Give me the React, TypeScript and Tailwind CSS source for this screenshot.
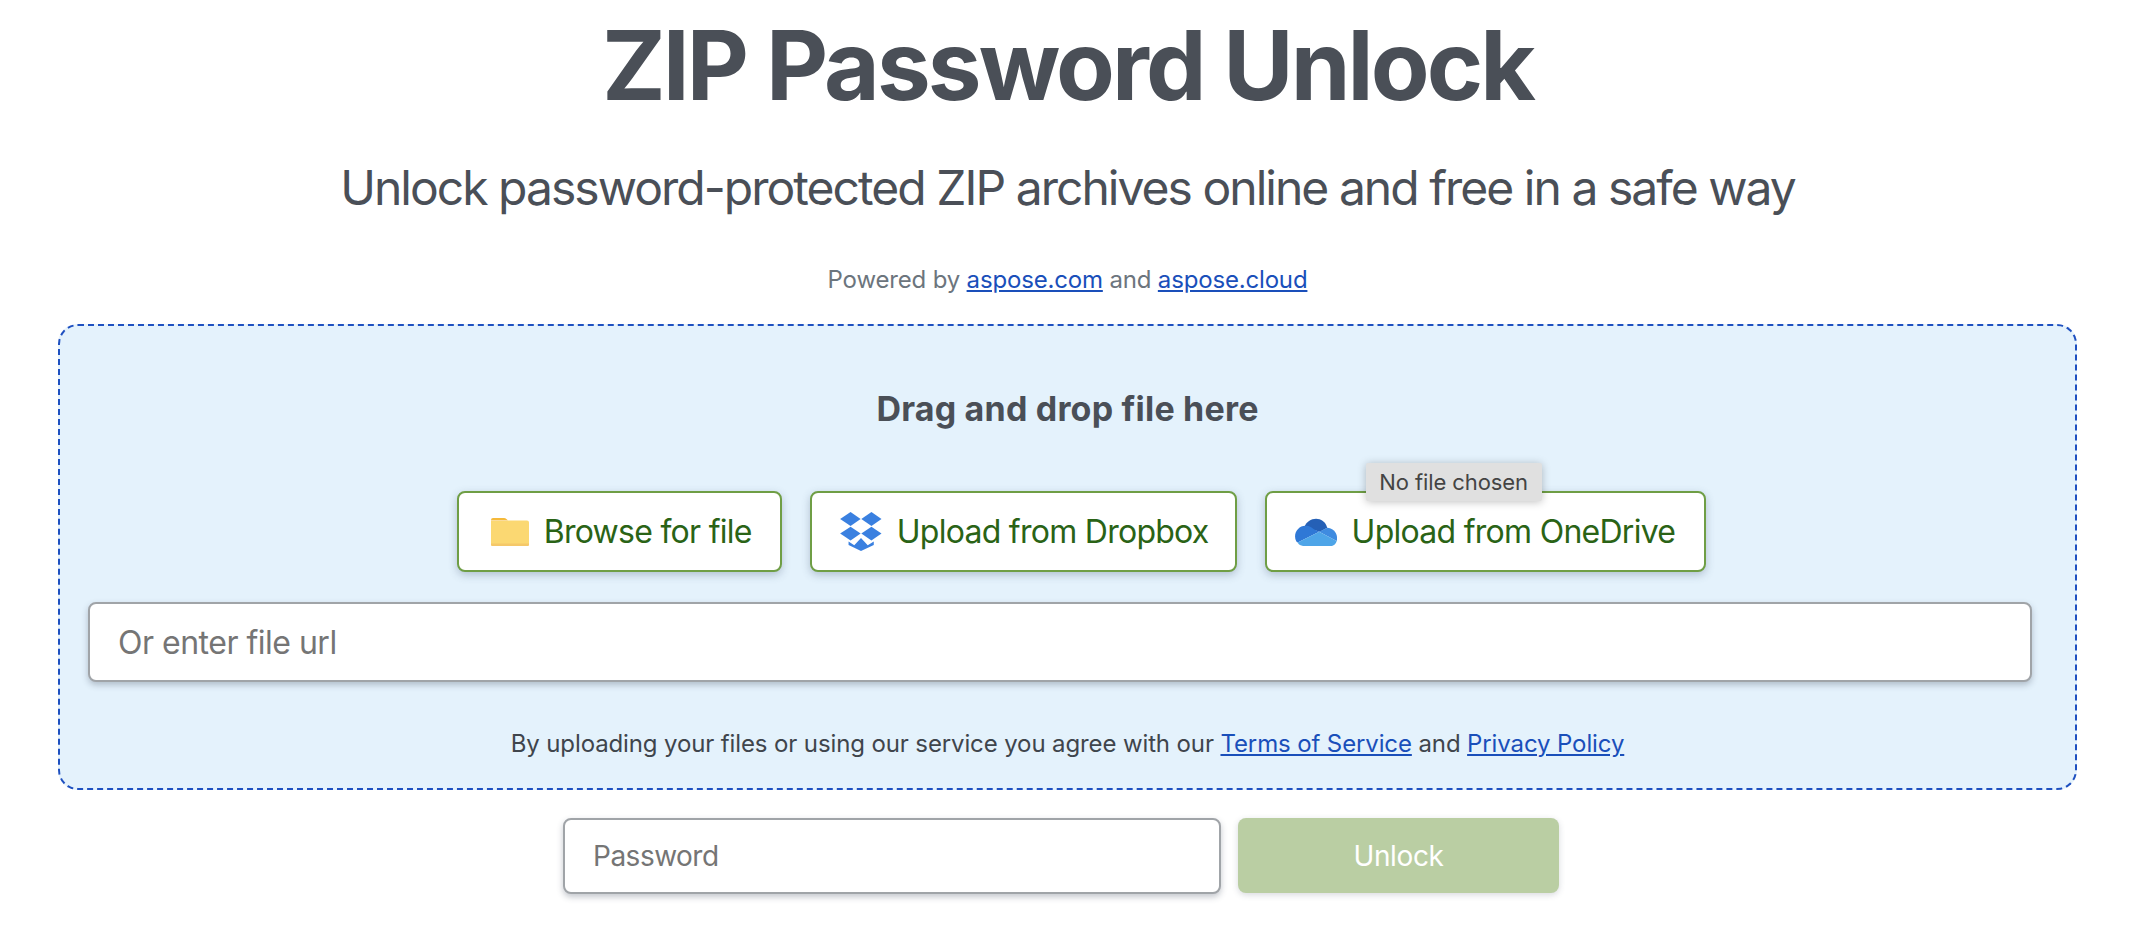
function FolderIcon() {
  return (
    <svg width="38" height="28" viewBox="0 0 38 28" className="shrink-0">
      <path d="M0 2a2 2 0 0 1 2-2h11c2 0 3 1.500 4 2.500H0z" fill="#f5b93a" />
      <path d="M0 3h15l2-.5h19a2 2 0 0 1 2 2V26H0z" fill="#fbd872" />
      <path d="M0 25.500h38V27a1 1 0 0 1-1 1H1a1 1 0 0 1-1-1z" fill="#f5c869" />
    </svg>
  );
}

function DropboxIcon() {
  return (
    <svg width="42" height="39" viewBox="30 15 124 116" className="shrink-0">
      <g fill="#3a80e0">
        <polygon points="61,15 91,36 61,57 30,36" />
        <polygon points="123,15 153,36 123,57 93,36" />
        <polygon points="61,59 91,79 61,100 30,79" />
        <polygon points="123,59 153,79 123,100 93,79" />
        <polygon points="55,103 72,114 92,92 112,114 130,103 130,113 92,131 55,113" />
      </g>
    </svg>
  );
}

function OneDriveIcon() {
  return (
    <svg width="42" height="28" viewBox="18 33 125 83" className="shrink-0">
      <path d="M46 60C56 28 104 24 114 62L92 74Z" fill="#2560b6" />
      <path d="M22 103C10 80 28 55 50 56C58 55 66 60 74 66L90 74L26 106Z" fill="#2f78d6" />
      <path d="M90 74L114 62C130 62 146 78 143 98L142 101Z" fill="#3f8be0" />
      <path d="M26 106L90 74L142 101C140 110 132 116 124 116L42 116C35 116 29 112 26 106Z" fill="#4ea5e8" />
    </svg>
  );
}

const linkClass = 'text-[#1a4fba] underline';
const buttonClass = 'flex h-[81px] items-center gap-[15px] rounded-lg border-2 border-[#6f9e45] bg-white text-[32px] tracking-[-0.73px] text-[#2a6316] shadow-[0_3px_8px_rgba(60,80,110,0.3)]';
const inputClass = 'rounded-lg border-2 border-[#a0a4a8] bg-white text-[#495057] outline-none placeholder:text-[#757575] shadow-[0_3px_6px_rgba(60,70,90,0.3)]';

export default function App() {
  return (
    <div className="flex min-h-screen flex-col items-center bg-white pr-[17px] font-[Inter,sans-serif] text-[#4a4f57]">
      <h1 className="text-[96px] leading-[130px] font-bold tracking-[-2.9px]">ZIP Password Unlock</h1>
      <h2 className="mt-[26px] text-[48px] leading-[64px] font-normal tracking-[-1.97px]">Unlock password-protected ZIP archives online and free in a safe way</h2>
      <p className="mt-[42px] text-[24px] leading-9 tracking-[-0.17px] text-[#6c757d]">
        Powered by <a className={linkClass}>aspose.com</a> and <a className={linkClass}>aspose.cloud</a>
      </p>

      <div className="mt-[26px] flex h-[466px] w-[2019px] flex-col items-center rounded-[20px] border-2 border-dashed border-[#1e50c0] bg-[#e4f2fc] px-[28px] pt-[63px]">
        <h3 className="text-[34px] leading-10 font-bold tracking-[0.2px]">Drag and drop file here</h3>
        <div className="mt-[62px] ml-[28px] flex gap-[28px]">
          <button className={`${buttonClass} pr-[28px] pl-[32px]`}>
            <FolderIcon />
            Browse for file
          </button>
          <button className={`${buttonClass} pr-[26px] pl-[28px]`}>
            <DropboxIcon />
            Upload from Dropbox
          </button>
          <div className="relative">
            <button className={`${buttonClass} pr-[29px] pl-[28px]`}>
              <OneDriveIcon />
              Upload from OneDrive
            </button>
            <div className="absolute top-[-28px] left-[101px] flex h-[38px] w-[176px] items-center justify-center rounded-[2px] bg-[#e0e0e0] text-[22px] tracking-[-0.1px] text-[#444] shadow-[0_1px_8px_rgba(0,0,0,0.25)]">
              No file chosen
            </div>
          </div>
        </div>
        <input
          placeholder="Or enter file url"
          className={`mt-[30px] h-[80px] w-[1944px] shrink-0 self-start px-7 text-[32px] tracking-[-0.5px] ${inputClass}`}
        />
        <p className="mt-[44px] text-[24px] leading-9 tracking-[-0.12px] text-[#3f454c]">
          By uploading your files or using our service you agree with our <a className={linkClass}>Terms of Service</a> and <a className={linkClass}>Privacy Policy</a>
        </p>
      </div>

      <div className="mt-[28px] flex gap-[17px] pr-[13px]">
        <input
          placeholder="Password"
          className={`h-[76px] w-[658px] px-7 text-[28px] tracking-[-0.5px] ${inputClass}`}
        />
        <button className="h-[75px] w-[321px] rounded-lg bg-[#bacea3] text-[28px] tracking-[-0.4px] text-white shadow-[0_2px_6px_rgba(60,70,90,0.2)]">
          Unlock
        </button>
      </div>
    </div>
  );
}
